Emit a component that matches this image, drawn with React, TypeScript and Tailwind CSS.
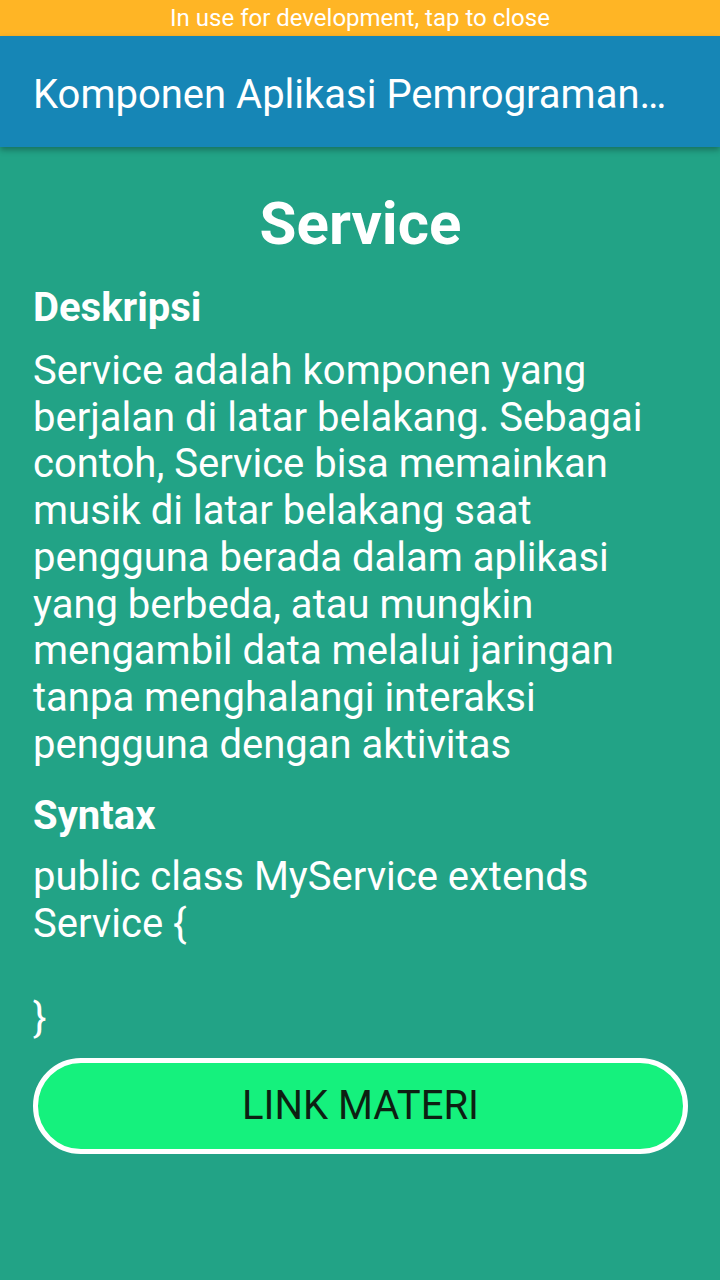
export default function App() {
  return (
    <div
      className="min-h-[1280px] w-[720px] bg-[#22a386] text-white"
      style={{ fontFamily: "Roboto, 'Noto Sans', sans-serif" }}
    >
      {/* dev status bar */}
      <div className="h-[36px] bg-[#ffb525] flex items-center justify-center">
        <span className="text-[24px] leading-none text-white">In use for development, tap to close</span>
      </div>

      {/* app bar */}
      <header className="h-[111px] bg-[#1686b6] flex items-center px-[33px] shadow-[0_3px_6px_rgba(0,0,0,0.3)] relative">
        <h1 className="text-[40px] font-normal whitespace-nowrap pt-[6px]">Komponen Aplikasi Pemrograman…</h1>
      </header>

      <main className="px-[33px] pr-[32px]">
        <h2 className="mt-[42px] text-center text-[60px] font-bold leading-[70px]">Service</h2>

        <h3 className="mt-[26px] text-[40px] font-bold leading-[46.75px]">Deskripsi</h3>
        <p className="mt-[16px] text-[40px] leading-[46.75px]">
          Service adalah komponen yang berjalan di latar belakang. Sebagai contoh, Service bisa memainkan musik di
          latar belakang saat pengguna berada dalam aplikasi yang berbeda, atau mungkin mengambil data melalui
          jaringan tanpa menghalangi interaksi pengguna dengan aktivitas
        </p>

        <h3 className="mt-[24px] text-[40px] font-bold leading-[46.75px]">Syntax</h3>
        <p className="mt-[15px] text-[40px] leading-[46.75px] whitespace-pre-line">
          {"public class MyService extends\nService {\n\u00a0\n}"}
        </p>

        <button className="mt-[17px] w-[655px] h-[96px] rounded-full border-[5px] border-white bg-[#15f17d] text-[40px] text-[#0d1f12] flex items-center justify-center">
          LINK MATERI
        </button>
      </main>
    </div>
  );
}
